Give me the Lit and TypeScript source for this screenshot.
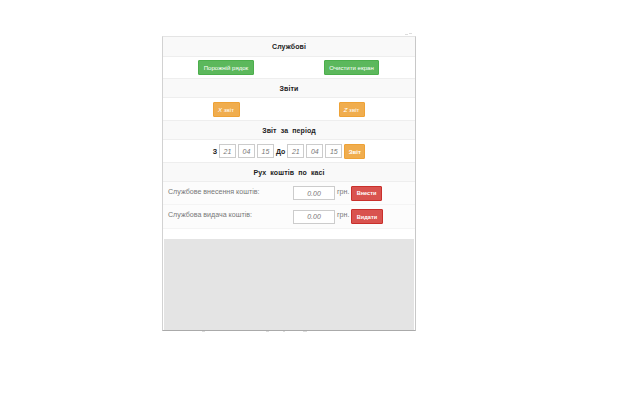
import { LitElement, html, css } from "lit";
import { customElement } from "lit/decorators.js";

@customElement("app-root")
export class AppRoot extends LitElement {
  static styles = css`
    :host { display: block; width: 640px; height: 400px; background: #fff; font-family: "Liberation Sans", Arial, sans-serif; overflow: hidden; position: relative; }
    .page { padding: 36px 0 0 162px; }
    .panel { width: 254px; height: 295px; box-sizing: border-box; background: #fff; border: 1px solid #d2d2d2; border-top-color: #e4e4e4; border-bottom: 1px solid #aaa; border-right-color: #c8c8c8; display: flex; flex-direction: column; }
    .head { height: 19px; flex: none; box-sizing: border-box; background: #f9f9f9; border-bottom: 1px solid #eee; display: flex; align-items: center; justify-content: center; font-size: 7px; font-weight: bold; color: #222; word-spacing: 2px; letter-spacing: 0.1px; }
    .first { height: 20px; }
    .row { flex: none; box-sizing: border-box; border-bottom: 1px solid #eee; display: grid; grid-template-columns: 126px 125px; align-items: center; justify-items: center; }
    .h22 { height: 22px; }
    .h23 { height: 23px; }
    .btn { height: 15px; box-sizing: border-box; display: flex; align-items: center; justify-content: center; color: #fff; font-size: 6.1px; border-radius: 1px; }
    .green { background: #5cb85c; border: 1px solid #4cae4c; }
    .orange { background: #f0ad4e; border: 1px solid #eea236; }
    .red { background: #d9534f; border: 1px solid #c9302c; font-weight: bold; font-size: 5.6px; }
    .w56 { width: 56px; } .w55 { width: 55px; } .w27 { width: 27px; } .w26 { width: 26px; } .w22 { width: 21px; }
    .period { height: 23px; flex: none; box-sizing: border-box; border-bottom: 1px solid #eee; display: flex; align-items: center; justify-content: center; gap: 2px; font-size: 7px; font-weight: bold; color: #222; }
    .inp { box-sizing: border-box; height: 14px; width: 17px; border: 1px solid #ccc; background: #fff; display: flex; align-items: center; justify-content: center; font-size: 7px; font-style: italic; font-weight: normal; color: #777; }
    .cash { flex: none; box-sizing: border-box; background: #fcfcfc; border-bottom: 1px solid #f4f4f4; display: flex; align-items: center; padding-left: 5px; font-size: 7.1px; color: #777; }
    .cash .label { width: 125px; align-self: flex-start; padding-top: 6px; }
    .money { width: 42px; height: 14px; box-sizing: border-box; border: 1px solid #ccc; background: #fff; display: flex; align-items: center; justify-content: center; font-size: 7px; font-style: italic; color: #777; }
    .cur { margin: 0 3px 0 2px; width: 11px; align-self: flex-start; padding-top: 6px; }
    .w31 { width: 31px; } .w32 { width: 32px; }
    .h24 { height: 24px; }
    .spacer { flex: none; height: 10px; }
    .gray { flex: 1; background: #e4e4e4; margin: 0 1px 0 1px; }
    .speck { position: absolute; height: 1px; background: #ddd; }
  `;
  render() {
    const specks = [[405, 34, 3], [409, 33, 3], [202, 331, 3], [266, 331, 3], [283, 331, 2], [303, 331, 4]];
    return html`<div class="page"><div class="panel">
      <div class="head first">Службові</div>
      <div class="row h22">
        <div class="btn green w56">Порожній рядок</div>
        <div class="btn green w55">Очистити екран</div>
      </div>
      <div class="head">Звіти</div>
      <div class="row h23">
        <div class="btn orange w27"><i>X</i>&nbsp;звіт</div>
        <div class="btn orange w26"><i>Z</i>&nbsp;звіт</div>
      </div>
      <div class="head">Звіт за період</div>
      <div class="period">
        <span>З</span>
        <div class="inp">21</div><div class="inp">04</div><div class="inp">15</div>
        <span>До</span>
        <div class="inp">21</div><div class="inp">04</div><div class="inp">15</div>
        <div class="btn orange w22">Звіт</div>
      </div>
      <div class="head">Рух коштів по касі</div>
      <div class="cash h23">
        <div class="label">Службове внесення коштів:</div>
        <div class="money">0.00</div><div class="cur">грн.</div>
        <div class="btn red w31">Внести</div>
      </div>
      <div class="cash h24">
        <div class="label">Службова видача коштів:</div>
        <div class="money">0.00</div><div class="cur">грн.</div>
        <div class="btn red w32">Видати</div>
      </div>
      <div class="spacer"></div>
      <div class="gray"></div>
    </div></div>
    ${specks.map(([x, y, w]) => html`<div class="speck" style="left:${x}px;top:${y}px;width:${w}px"></div>`)}`;
  }
}
